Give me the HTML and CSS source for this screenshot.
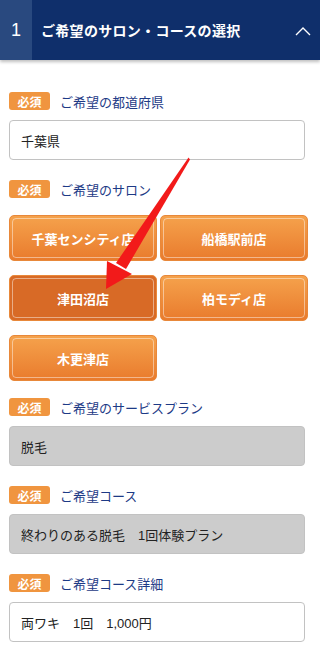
FILE: index.html
```html
<!DOCTYPE html>
<html lang="ja">

<head>
    <meta charset="UTF-8">
    <meta name="viewport" content="width=device-width, initial-scale=1.0">
    <title>ご希望のサロン・コースの選択</title>
    <link rel="stylesheet" href="styles.css">
</head>

<body>
    <div class="page">
        <div class="step-head">
            <div class="step-num">1</div>
            <div class="step-title">ご希望のサロン・コースの選択</div>
            <svg class="chevron" width="16" height="10" viewBox="0 0 16 10">
                <path d="M1 9 L8 2 L15 9" fill="none" stroke="#fff" stroke-width="1.4"/>
            </svg>
        </div>

        <div class="form">
            <div class="label"><span class="req">必須</span>ご希望の都道府県</div>
            <div class="field">千葉県</div>

            <div class="label"><span class="req">必須</span>ご希望のサロン</div>
            <div class="salons">
                <div class="salon">千葉センシティ店</div>
                <div class="salon">船橋駅前店</div>
                <div class="salon selected">津田沼店</div>
                <div class="salon">柏モディ店</div>
                <div class="salon">木更津店</div>
            </div>

            <div class="label"><span class="req">必須</span>ご希望のサービスプラン</div>
            <div class="field locked">脱毛</div>

            <div class="label"><span class="req">必須</span>ご希望コース</div>
            <div class="field locked">終わりのある脱毛　1回体験プラン</div>

            <div class="label"><span class="req">必須</span>ご希望コース詳細</div>
            <div class="field">両ワキ　1回　1,000円</div>
        </div>

        <!-- red pointer arrow drawn over the form -->
        <svg class="pointer" width="320" height="656" viewBox="0 0 320 656">
            <polygon points="188.5,157.5 190,159.5 126,269 116,263" fill="#f21a1a"/>
            <polygon points="106,289 107,261 132,274" fill="#f21a1a"/>
        </svg>
    </div>
</body>

</html>
```

FILE: styles.css
```css
body {
    margin: 0;
    font-family: "Liberation Sans", "Noto Sans CJK JP", sans-serif;
    background-color: #ffffff;
}

.page {
    position: relative;
    width: 320px;
    height: 656px;
    overflow: hidden;
}

.step-head {
    display: flex;
    align-items: center;
    height: 60px;
    background-color: #0f2f6b;
    color: #ffffff;
    box-shadow: 0 2px 3px rgba(0, 0, 0, 0.25);
}

.step-num {
    width: 32px;
    height: 100%;
    display: flex;
    align-items: center;
    justify-content: center;
    background-color: #29497f;
    font-size: 18px;
}

.step-title {
    flex: 1;
    padding-left: 9px;
    font-size: 14px;
    font-weight: bold;
    letter-spacing: 0.3px;
}

.chevron {
    margin-right: 9px;
    margin-top: 2px;
}

.form {
    display: flex;
    flex-direction: column;
    padding: 32px 12px 0 9px;
}

.label {
    display: flex;
    align-items: center;
    height: 18px;
    font-size: 13px;
    color: #1d3a86;
    margin-bottom: 10px;
}

.req {
    display: inline-flex;
    align-items: center;
    justify-content: center;
    width: 41px;
    height: 18px;
    margin-right: 10px;
    border-radius: 3px;
    background-color: #f0953f;
    color: #ffffff;
    font-size: 12px;
    font-weight: bold;
}

.field {
    box-sizing: border-box;
    width: 296px;
    height: 40px;
    display: flex;
    align-items: center;
    padding: 0 11px;
    border: 1px solid #c2c2c2;
    border-radius: 4px;
    background-color: #ffffff;
    font-size: 13px;
    color: #222222;
    margin-bottom: 20px;
}

.field.locked {
    background-color: #cccccc;
}

.salons {
    display: grid;
    grid-template-columns: 148px 148px;
    column-gap: 3px;
    row-gap: 14px;
    margin-top: 7px;
    margin-bottom: 17px;
}

.salon {
    position: relative;
    box-sizing: border-box;
    height: 46px;
    display: flex;
    align-items: center;
    justify-content: center;
    border: 1px solid #e8883a;
    border-radius: 5px;
    background: linear-gradient(#f5a24c, #e97b2d);
    color: #ffffff;
    font-size: 13px;
    font-weight: bold;
}

.salon::before {
    content: "";
    position: absolute;
    top: 2px;
    left: 2px;
    right: 2px;
    bottom: 2px;
    border: 1px solid rgba(255, 255, 255, 0.45);
    border-radius: 4px;
}

.salon.selected {
    background: #d86a26;
    border-color: #e8883a;
}

.pointer {
    position: absolute;
    top: 0;
    left: 0;
    pointer-events: none;
}
```
